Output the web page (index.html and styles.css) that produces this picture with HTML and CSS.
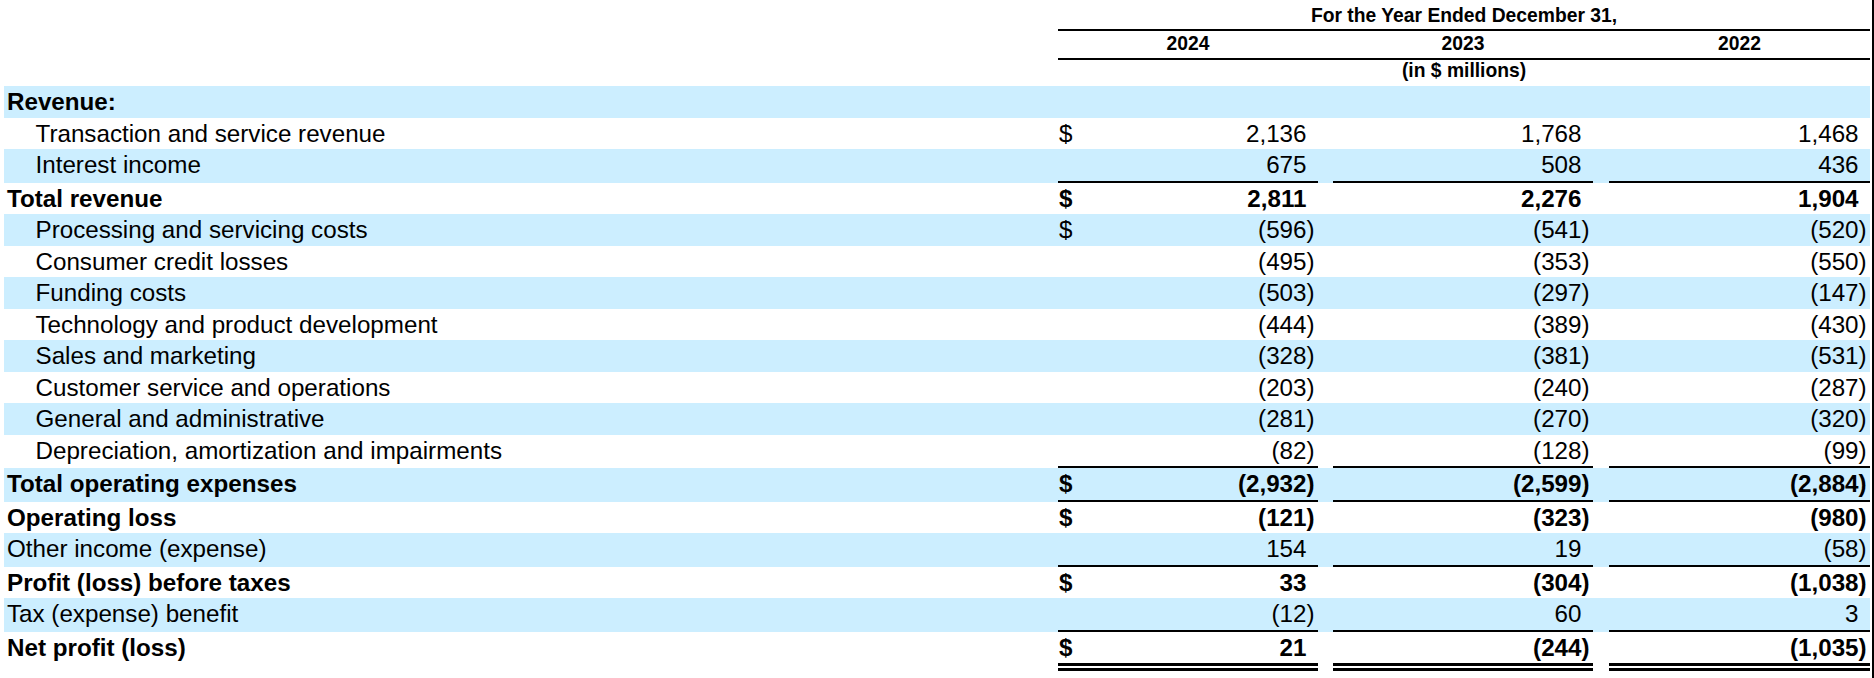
FILE: index.html
```html
<!DOCTYPE html>
<html lang="en">
<head>
<meta charset="utf-8">
<title>Consolidated Statements of Operations</title>
<link rel="stylesheet" href="styles.css">
</head>
<body>
<div class="page">
<table class="fin">
  <colgroup>
    <col class="c-label">
    <col class="c-val">
    <col class="c-gap1">
    <col class="c-val">
    <col class="c-gap2">
    <col class="c-val3">
  </colgroup>
  <thead>
    <tr class="h1">
      <th></th>
      <th colspan="5" class="u">For the Year Ended December 31,</th>
    </tr>
    <tr class="h2">
      <th></th>
      <th class="u">2024</th>
      <th class="u"></th>
      <th class="u">2023</th>
      <th class="u"></th>
      <th class="u">2022</th>
    </tr>
    <tr class="h3">
      <th></th>
      <th colspan="5">(in $ millions)</th>
    </tr>
  </thead>
  <tbody>
    <tr class="s b">
      <td class="l">Revenue:</td>
      <td class="v"></td><td class="g"></td><td class="v"></td><td class="g"></td><td class="v"></td>
    </tr>
    <tr>
      <td class="l i">Transaction and service revenue</td>
      <td class="v"><span class="cur">$</span>2,136<span class="p"></span></td><td class="g"></td>
      <td class="v">1,768<span class="p"></span></td><td class="g"></td>
      <td class="v">1,468<span class="p"></span></td>
    </tr>
    <tr class="s">
      <td class="l i">Interest income</td>
      <td class="v u">675<span class="p"></span></td><td class="g"></td>
      <td class="v u">508<span class="p"></span></td><td class="g"></td>
      <td class="v u">436<span class="p"></span></td>
    </tr>
    <tr class="b">
      <td class="l">Total revenue</td>
      <td class="v"><span class="cur">$</span>2,811<span class="p"></span></td><td class="g"></td>
      <td class="v">2,276<span class="p"></span></td><td class="g"></td>
      <td class="v">1,904<span class="p"></span></td>
    </tr>
    <tr class="s">
      <td class="l i">Processing and servicing costs</td>
      <td class="v"><span class="cur">$</span>(596<span class="p">)</span></td><td class="g"></td>
      <td class="v">(541<span class="p">)</span></td><td class="g"></td>
      <td class="v">(520<span class="p">)</span></td>
    </tr>
    <tr>
      <td class="l i">Consumer credit losses</td>
      <td class="v">(495<span class="p">)</span></td><td class="g"></td>
      <td class="v">(353<span class="p">)</span></td><td class="g"></td>
      <td class="v">(550<span class="p">)</span></td>
    </tr>
    <tr class="s">
      <td class="l i">Funding costs</td>
      <td class="v">(503<span class="p">)</span></td><td class="g"></td>
      <td class="v">(297<span class="p">)</span></td><td class="g"></td>
      <td class="v">(147<span class="p">)</span></td>
    </tr>
    <tr>
      <td class="l i">Technology and product development</td>
      <td class="v">(444<span class="p">)</span></td><td class="g"></td>
      <td class="v">(389<span class="p">)</span></td><td class="g"></td>
      <td class="v">(430<span class="p">)</span></td>
    </tr>
    <tr class="s">
      <td class="l i">Sales and marketing</td>
      <td class="v">(328<span class="p">)</span></td><td class="g"></td>
      <td class="v">(381<span class="p">)</span></td><td class="g"></td>
      <td class="v">(531<span class="p">)</span></td>
    </tr>
    <tr>
      <td class="l i">Customer service and operations</td>
      <td class="v">(203<span class="p">)</span></td><td class="g"></td>
      <td class="v">(240<span class="p">)</span></td><td class="g"></td>
      <td class="v">(287<span class="p">)</span></td>
    </tr>
    <tr class="s">
      <td class="l i">General and administrative</td>
      <td class="v">(281<span class="p">)</span></td><td class="g"></td>
      <td class="v">(270<span class="p">)</span></td><td class="g"></td>
      <td class="v">(320<span class="p">)</span></td>
    </tr>
    <tr>
      <td class="l i">Depreciation, amortization and impairments</td>
      <td class="v u">(82<span class="p">)</span></td><td class="g"></td>
      <td class="v u">(128<span class="p">)</span></td><td class="g"></td>
      <td class="v u">(99<span class="p">)</span></td>
    </tr>
    <tr class="s b">
      <td class="l">Total operating expenses</td>
      <td class="v u"><span class="cur">$</span>(2,932<span class="p">)</span></td><td class="g"></td>
      <td class="v u">(2,599<span class="p">)</span></td><td class="g"></td>
      <td class="v u">(2,884<span class="p">)</span></td>
    </tr>
    <tr class="b">
      <td class="l">Operating loss</td>
      <td class="v"><span class="cur">$</span>(121<span class="p">)</span></td><td class="g"></td>
      <td class="v">(323<span class="p">)</span></td><td class="g"></td>
      <td class="v">(980<span class="p">)</span></td>
    </tr>
    <tr class="s">
      <td class="l">Other income (expense)</td>
      <td class="v u">154<span class="p"></span></td><td class="g"></td>
      <td class="v u">19<span class="p"></span></td><td class="g"></td>
      <td class="v u">(58<span class="p">)</span></td>
    </tr>
    <tr class="b">
      <td class="l">Profit (loss) before taxes</td>
      <td class="v"><span class="cur">$</span>33<span class="p"></span></td><td class="g"></td>
      <td class="v">(304<span class="p">)</span></td><td class="g"></td>
      <td class="v">(1,038<span class="p">)</span></td>
    </tr>
    <tr class="s">
      <td class="l">Tax (expense) benefit</td>
      <td class="v u">(12<span class="p">)</span></td><td class="g"></td>
      <td class="v u">60<span class="p"></span></td><td class="g"></td>
      <td class="v u">3<span class="p"></span></td>
    </tr>
    <tr class="b">
      <td class="l">Net profit (loss)</td>
      <td class="v dbl"><span class="cur">$</span>21<span class="p"></span></td><td class="g"></td>
      <td class="v dbl">(244<span class="p">)</span></td><td class="g"></td>
      <td class="v dbl">(1,035<span class="p">)</span></td>
    </tr>
  </tbody>
</table>
</div>
</body>
</html>
```

FILE: styles.css
```css
html, body {
  margin: 0;
  padding: 0;
  background: #ffffff;
}

body {
  font-family: "Liberation Sans", Arial, Helvetica, sans-serif;
  color: #000000;
}

.page {
  width: 1868px;
  min-height: 678px;
  padding-left: 4px;
  border-right: 2px solid #000000;
}

.fin {
  width: 1866px;
  table-layout: fixed;
  border-collapse: separate;
  border-spacing: 0;
}

.c-label { width: 1054px; }
.c-val { width: 260px; }
.c-gap1 { width: 15px; }
.c-gap2 { width: 16px; }
.c-val3 { width: 261px; }

/* header */
.fin th {
  font-size: 19.3px;
  font-weight: bold;
  line-height: 22px;
  text-align: center;
  vertical-align: top;
  padding: 0;
}

.h1 th { padding: 5px 0 1.5px; }
.h2 th { padding: 2px 0 3px; }
.h3 th { padding: 0 0 4.5px; }

.fin th.u { border-bottom: 2px solid #000000; }

/* body */
.fin td {
  font-size: 24.2px;
  line-height: 27px;
  padding: 2px 0 2.5px;
  vertical-align: top;
  white-space: nowrap;
}

.fin tr.s td { background: #cceeff; }
.fin tr.b td { font-weight: bold; }

.fin td.l {
  padding-left: 3px;
  text-align: left;
}

.fin td.l.i { padding-left: 31.5px; }

.fin td.v {
  text-align: right;
  padding-right: 3.5px;
}

.fin td.u { border-bottom: 2px solid #000000; }
.fin td.dbl { border-bottom: 8px double #000000; }

.cur {
  float: left;
  padding-left: 1px;
}

.p {
  display: inline-block;
  width: 8px;
  text-align: left;
}
```
